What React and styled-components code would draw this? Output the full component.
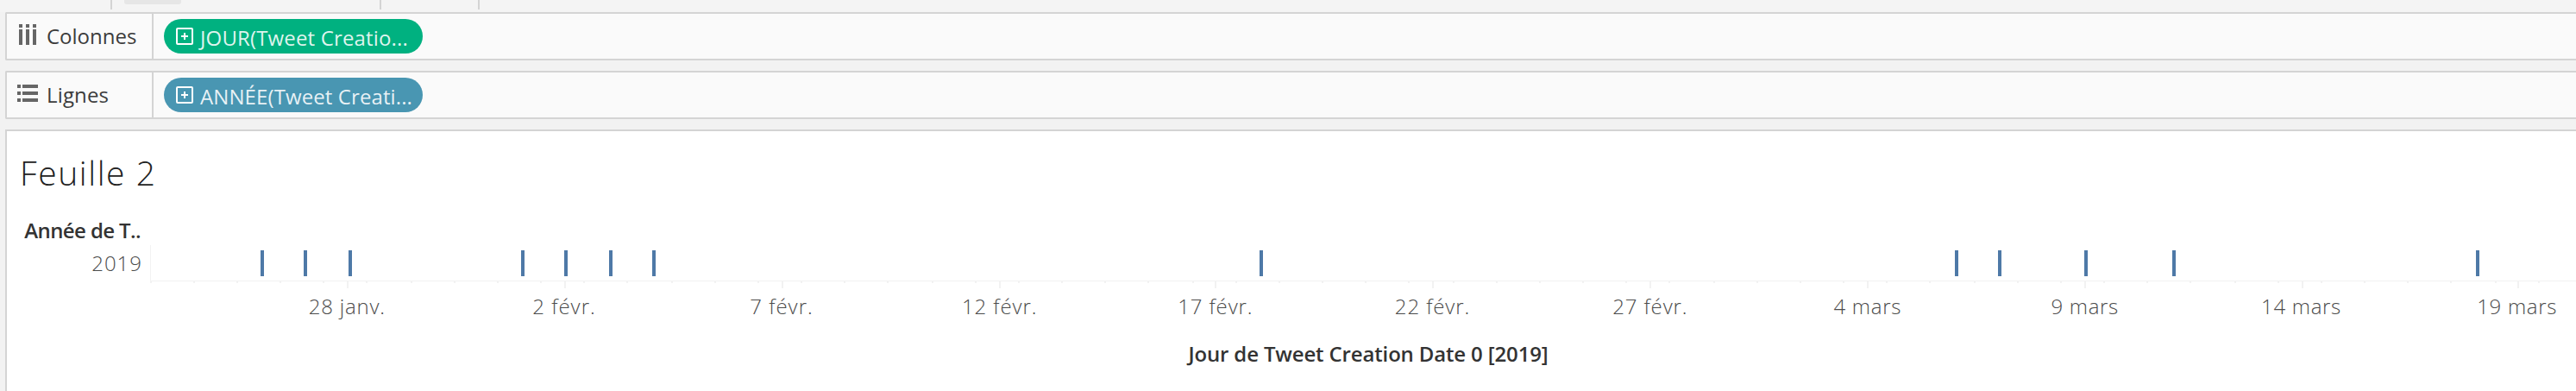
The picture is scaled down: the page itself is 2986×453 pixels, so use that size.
import React from "react";
import styled, { createGlobalStyle } from "styled-components";

const GlobalStyle = createGlobalStyle`
  *, *::before, *::after { box-sizing: border-box; }
  html, body { margin: 0; padding: 0; overflow: hidden; background: #f2f2f2; }
  body { font-family: "Open Sans", "Noto Sans", sans-serif; color: #333; }
`;

const Workspace = styled.div`
  display: flex;
  flex-direction: column;
  width: 100%;
  height: 453px;
  overflow: hidden;
`;

const Toolbar = styled.div`
  display: flex;
  flex: none;
  align-items: flex-start;
  height: 14px;
  padding-left: 128px;
  background: #f4f4f4;
`;

const Separator = styled.div`
  width: 2px;
  height: 11px;
  background: #d4d4d4;
`;

const ToolbarButton = styled.div`
  width: 66px;
  height: 5px;
  margin: 0 230px 0 14px;
  border-radius: 0 0 3px 3px;
  background: #e6e6e6;
`;

const ToolbarSpace = styled.div`
  width: 112px;
`;

const Shelves = styled.div`
  display: flex;
  flex: none;
  flex-direction: column;
  gap: 12px;
  padding-left: 6px;
  margin-bottom: 12px;
`;

const Shelf = styled.div`
  display: flex;
  height: 56px;
  border: 2px solid #d4d4d4;
  border-right: 0;
  border-radius: 2px 0 0 2px;
  background: #fafafa;
`;

const ShelfLabel = styled.div`
  display: flex;
  align-items: center;
  gap: 8px;
  width: 170px;
  padding-left: 12px;
  border-right: 2px solid #d4d4d4;
  color: #3c3c3c;
  font-size: 24px;
  font-weight: 375;
  line-height: 50px;
  letter-spacing: ${(p) => p.$spacing}px;

  svg { flex: none; margin-bottom: 4px; }
`;

const ShelfContent = styled.div`
  display: flex;
  flex: 1;
  align-items: center;
  padding-left: 12px;
`;

const Pill = styled.div`
  display: flex;
  align-items: center;
  gap: 8px;
  width: 300px;
  height: 40px;
  padding-left: 14px;
  border-radius: 20px;
  background: ${(p) => p.$color};
  color: rgba(255, 255, 255, 0.88);
  font-size: 24px;
  font-weight: 375;
  line-height: 38px;
  white-space: nowrap;
  letter-spacing: ${(p) => p.$spacing}px;

  svg { flex: none; }
  span { padding-top: 3px; }
`;

const Sheet = styled.main`
  flex: 1;
  margin-left: 6px;
  border-top: 2px solid #d4d4d4;
  border-left: 2px solid #d4d4d4;
  background: #fff;
`;

const SheetTitle = styled.h1`
  margin: 0;
  padding: 22px 0 0 15px;
  font-size: 39px;
  font-weight: 300;
  line-height: 52px;
  letter-spacing: 1.6px;
  color: #222;
`;

const View = styled.div`
  display: grid;
  grid-template-columns: 155px 1fr;
  grid-template-rows: 30px 110px 32px;
  column-gap: 11px;
  padding-top: 28px;
`;

const FieldHeader = styled.div`
  grid-column: 1;
  text-align: right;
  font-size: 24px;
  font-weight: 600;
  line-height: 26px;
  letter-spacing: -0.6px;
  white-space: nowrap;
`;

const RowHeader = styled.div`
  grid-column: 1;
  grid-row: 2;
  padding-top: 4px;
  margin-right: -2px;
  color: #4c4c4c;
  text-align: right;
  font-size: 24px;
  font-weight: 300;
  line-height: 34px;
  letter-spacing: 1px;
`;

const Plot = styled.svg`
  grid-column: 2;
  grid-row: 2;
  display: block;
  width: 2812px;
  height: 110px;
  shape-rendering: crispEdges;
`;

const TickLabel = styled.text`
  fill: #4c4c4c;
  font-size: 24px;
  font-weight: 300;
  text-anchor: middle;
`;

const AxisTitle = styled.div`
  grid-column: 2;
  grid-row: 3;
  padding-left: 12px;
  text-align: center;
  font-size: 24px;
  font-weight: 600;
  line-height: 32px;
  letter-spacing: -0.15px;
`;

const ColumnsIcon = () => (
  <svg width="26" height="24" fill="#666" shapeRendering="crispEdges">
    {[2, 10, 18].map((x) => (
      <path key={x} d={`M${x} 0h4v4h-4zM${x} 6h4v18h-4z`} />
    ))}
  </svg>
);

const RowsIcon = () => (
  <svg width="26" height="20" fill="#666" shapeRendering="crispEdges">
    {[0, 8, 16].map((y) => (
      <path key={y} d={`M0 ${y}h4v4h-4zM6 ${y}h18v4h-18z`} />
    ))}
  </svg>
);

const ExpandIcon = () => (
  <svg width="20" height="20" fill="none" stroke="#fff" strokeWidth="2">
    <rect x="1" y="1" width="18" height="18" rx="1" />
    <path d="M10 6v8M6 10h8" />
  </svg>
);

const shelves = [
  { name: "Colonnes", icon: <ColumnsIcon />, spacing: 0, field: "JOUR(Tweet Creatio...", color: "#00b180", pillSpacing: 0.15 },
  { name: "Lignes", icon: <RowsIcon />, spacing: 0.15, field: "ANNÉE(Tweet Creati...", color: "#4996b2", pillSpacing: 0.1 },
];

const marks = [128, 178, 230, 430, 480, 532, 582, 1286, 2092, 2142, 2242, 2344, 2696];

const ticks = [
  { x: 228, label: "28 janv.", at: 228.3, spacing: 0.8 },
  { x: 480, label: "2 févr.", at: 480, spacing: 1 },
  { x: 732, label: "7 févr.", at: 732, spacing: 1 },
  { x: 984, label: "12 févr.", at: 984.6, spacing: 0.9 },
  { x: 1234, label: "17 févr.", at: 1234.8, spacing: 0.9 },
  { x: 1486, label: "22 févr.", at: 1486.5, spacing: 0.9 },
  { x: 1738, label: "27 févr.", at: 1738.8, spacing: 0.9 },
  { x: 1990, label: "4 mars", at: 1990.8, spacing: 0.7 },
  { x: 2242, label: "9 mars", at: 2242.7, spacing: 0.7 },
  { x: 2494, label: "14 mars", at: 2493.5, spacing: 0.7 },
  { x: 2744, label: "19 mars", at: 2743.7, spacing: 0.7 },
];

const minorTicks = Array.from({ length: 56 }, (_, i) => 2 * Math.floor(i * 25.167));

export default function App() {
  return (
    <>
      <GlobalStyle />
      <Workspace>
        <Toolbar>
          <Separator />
          <ToolbarButton />
          <Separator />
          <ToolbarSpace />
          <Separator />
        </Toolbar>
        <Shelves>
          {shelves.map((s) => (
            <Shelf key={s.name}>
              <ShelfLabel $spacing={s.spacing}>
                {s.icon}
                <span>{s.name}</span>
              </ShelfLabel>
              <ShelfContent>
                <Pill $color={s.color} $spacing={s.pillSpacing}>
                  <ExpandIcon />
                  <span>{s.field}</span>
                </Pill>
              </ShelfContent>
            </Shelf>
          ))}
        </Shelves>
        <Sheet>
          <SheetTitle>Feuille 2</SheetTitle>
          <View>
            <FieldHeader>Année de T..</FieldHeader>
            <RowHeader>2019</RowHeader>
            <Plot viewBox="0 0 2812 110">
              <g fill="#f2f2f2">
                <rect x="0" y="0" width="1" height="42" />
                <rect x="0" y="41" width="2812" height="1" />
                {minorTicks.map((x) => (
                  <rect key={x} x={x} y="42" width="2" height="2" />
                ))}
                {ticks.map((t) => (
                  <rect key={t.x} x={t.x} y="42" width="2" height="8" />
                ))}
              </g>
              {marks.map((x) => (
                <rect key={x} x={x} y="6" width="4" height="30" fill="#4e79a7" />
              ))}
              {ticks.map((t) => (
                <TickLabel key={t.label} x={t.at} y="80" letterSpacing={t.spacing}>
                  {t.label}
                </TickLabel>
              ))}
            </Plot>
            <AxisTitle>Jour de Tweet Creation Date 0 [2019]</AxisTitle>
          </View>
        </Sheet>
      </Workspace>
    </>
  );
}
